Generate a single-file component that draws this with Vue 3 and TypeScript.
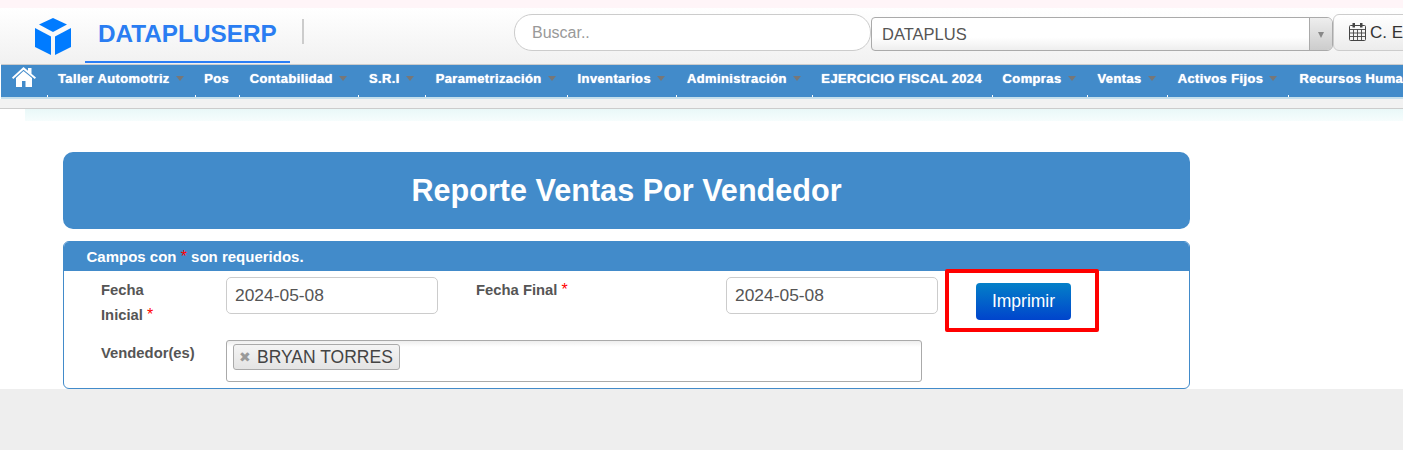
<template>
  <div class="page">
    <header class="topbar">
      <div class="brand">
        <svg class="brand__cube" viewBox="0 0 36 37" aria-hidden="true">
          <path d="M18 0 32 6.500 18 14 4 6.500Z" />
          <path d="M0 10 16 18.500V37L0 29Z" />
          <path d="M36 10 20 18.500V37L36 29Z" />
        </svg>
        <span class="brand__name">DATAPLUSERP</span>
      </div>
      <div class="topbar__rule" />
      <div class="search">Buscar..</div>
      <div class="company">
        <span class="company__value">DATAPLUS</span>
        <span class="company__arrow"><i /></span>
      </div>
      <div class="period">
        <svg class="period__icon" viewBox="0 0 17 18" aria-hidden="true">
          <path d="M1.500 2.500h14a1 1 0 0 1 1 1v13a1 1 0 0 1-1 1h-14a1 1 0 0 1-1-1v-13a1 1 0 0 1 1-1Z" fill="none" stroke="#444" />
          <path d="M1 6.500h15M1 10h15M1 13.500h15M4.500 6.500v11M8.500 6.500v11M12.500 6.500v11" fill="none" stroke="#444" stroke-width=".9" />
          <path d="M3.500 0h2.500v4.500h-2.500zM11 0h2.500v4.500h-2.500z" fill="#444" />
        </svg>
        <span>C. E</span>
      </div>
    </header>

    <nav class="menu">
      <a class="menu__home">
        <svg viewBox="0 0 24 20" aria-hidden="true">
          <path d="M11.500 0 16 3.800V1H19.500V6.800L24 10.600 22.800 12 11.500 2.800 1.200 12 0 10.600Z" />
          <path d="M11.500 4 20 11V20H13.500V14H10V20H4V11Z" />
        </svg>
      </a>
      <a
        v-for="item in menuItems"
        :key="item.label"
        class="menu__item"
        :class="{ 'menu__item--plain': !item.caret }"
      >
        {{ item.label }}<i v-if="item.caret" class="menu__caret" />
      </a>
    </nav>
    <div class="subbar" />
    <div class="fade" />

    <main class="content">
      <h1 class="title">Reporte Ventas Por Vendedor</h1>
      <section class="panel">
        <div class="panel__head">Campos con <em>*</em> son requeridos.</div>
        <div class="panel__body">
          <div class="row">
            <label class="field-label field-label--start field-label--wrap">Fecha Inicial <em>*</em></label>
            <div class="input">2024-05-08</div>
            <label class="field-label field-label--end">Fecha Final <em>*</em></label>
            <div class="input">2024-05-08</div>
            <div class="print">
              <button class="print__btn" type="button">Imprimir</button>
            </div>
          </div>
          <div class="row row--second">
            <label class="field-label field-label--start">Vendedor(es)</label>
            <div class="multi">
              <span class="tag"><i class="tag__x">✖</i>BRYAN TORRES</span>
            </div>
          </div>
        </div>
      </section>
    </main>
    <div class="footer" />
  </div>
</template>

<script setup lang="ts">
interface MenuItem {
  label: string
  caret: boolean
}

const menuItems: MenuItem[] = [
  { label: 'Taller Automotriz', caret: true },
  { label: 'Pos', caret: false },
  { label: 'Contabilidad', caret: true },
  { label: 'S.R.I', caret: true },
  { label: 'Parametrización', caret: true },
  { label: 'Inventarios', caret: true },
  { label: 'Administración', caret: true },
  { label: 'EJERCICIO FISCAL 2024', caret: false },
  { label: 'Compras', caret: true },
  { label: 'Ventas', caret: true },
  { label: 'Activos Fijos', caret: true },
  { label: 'Recursos Humanos', caret: true },
]
</script>

<style>
html,
body {
  margin: 0;
  background: #fff;
}
</style>

<style scoped>
.page {
  width: 1403px;
  height: 450px;
  overflow: hidden;
  display: flex;
  flex-direction: column;
  font-family: "Liberation Sans", Arial, sans-serif;
  color: #555;
  background: #fff;
  border-top: 8px solid #fff5f8;
  box-sizing: border-box;
}

.topbar {
  flex: 0 0 56px;
  display: flex;
  align-items: flex-start;
  background: linear-gradient(180deg, #fff 0%, #f1f1f1 100%);
}

.brand {
  flex: 0 0 205px;
  height: 55px;
  margin-left: 85px;
  display: flex;
  align-items: flex-start;
  box-sizing: border-box;
  border-bottom: 2px solid #2b7ef5;
  position: relative;
}

.brand__cube {
  position: absolute;
  left: -50px;
  top: 10px;
  width: 36px;
  height: 37px;
  fill: #007bff;
}

.brand__name {
  margin: 12px 0 0 13px;
  font-size: 24.300px;
  line-height: 28px;
  font-weight: 700;
  color: #2a7df2;
}

.topbar__rule {
  flex: 0 0 2px;
  height: 25px;
  margin: 11px 210px 0 12px;
  background: #ccc;
}

.search {
  flex: 0 0 357px;
  height: 37px;
  margin-top: 6px;
  box-sizing: border-box;
  padding-left: 17px;
  border: 1px solid #ccc;
  border-radius: 18px;
  background: #fff;
  font-size: 16px;
  line-height: 35px;
  color: #999;
}

.company {
  flex: 0 0 462px;
  height: 34px;
  margin-top: 9px;
  display: flex;
  box-sizing: border-box;
  border: 1px solid #aaa;
  border-radius: 4px 6px 6px 4px;
  background: linear-gradient(180deg, #fff 60%, #eee 100%);
  font-size: 16.500px;
  line-height: 32px;
  overflow: hidden;
}

.company__value {
  flex: 1;
  padding-left: 10px;
}

.company__arrow {
  flex: 0 0 22px;
  display: flex;
  align-items: center;
  justify-content: center;
  border-left: 1px solid #aaa;
  background: linear-gradient(180deg, #eee 0%, #ccc 100%);
}

.company__arrow i {
  width: 0;
  height: 0;
  margin-top: 2px;
  border-left: 3.500px solid transparent;
  border-right: 3.500px solid transparent;
  border-top: 6px solid #888;
}

.period {
  flex: 0 0 auto;
  width: 90px;
  height: 37px;
  margin-top: 6px;
  box-sizing: border-box;
  padding-left: 15px;
  display: flex;
  align-items: center;
  gap: 4px;
  border: 1px solid #ccc;
  border-radius: 6px;
  background: linear-gradient(180deg, #fff 0%, #ececec 100%);
  font-size: 17px;
  color: #333;
}

.period__icon {
  width: 17px;
  height: 18px;
  margin-top: -1px;
}

.menu {
  flex: 0 0 33px;
  display: flex;
  box-sizing: border-box;
  margin-left: 1px;
  border-top: 1px solid #ccc;
  background: #428bca;
  white-space: nowrap;
  box-shadow: 0 2px 0 #c5dfec;
}

.menu__home {
  flex: 0 0 46px;
  display: flex;
  padding: 2px 0 0 11px;
  box-sizing: border-box;
}

.menu__home svg {
  width: 24px;
  height: 20px;
  fill: #fff;
}

.menu__item {
  position: relative;
  flex: 0 0 auto;
  padding: 7px 11px 0;
  font-size: 13px;
  letter-spacing: 0.37px;
  line-height: 14px;
  font-weight: 700;
  color: #fff;
  text-shadow: 0 0 1px #fff;
}

.menu__item--plain {
  padding: 7px 9.500px 0;
}

.menu__item::before {
  content: "";
  position: absolute;
  left: 0;
  bottom: 0;
  width: 1px;
  height: 2px;
  background: #fff;
}

.menu__caret {
  display: inline-block;
  width: 0;
  height: 0;
  margin-left: 6px;
  vertical-align: 2px;
  border-left: 4.500px solid transparent;
  border-right: 4.500px solid transparent;
  border-top: 5px solid #777;
}

.subbar {
  flex: 0 0 10px;
  margin-top: 2px;
  box-sizing: border-box;
  background: #f2f2f2;
  border-bottom: 1px solid #ccc;
}

.fade {
  flex: 0 0 12px;
  margin-left: 25px;
  background: linear-gradient(180deg, #e9f8f8 0%, #f6fdfd 100%);
}

.content {
  flex: 0 0 268px;
  padding: 31px 0 0 63px;
  box-sizing: border-box;
  width: 1190px;
}

.title {
  margin: 0;
  height: 77px;
  border-radius: 10px;
  background: #428bca;
  color: #fff;
  font-size: 30.600px;
  line-height: 77px;
  font-weight: 700;
  text-align: center;
}

.panel {
  margin-top: 12px;
  height: 148px;
  box-sizing: border-box;
  border: 1px solid #428bca;
  border-radius: 6px;
  overflow: hidden;
}

.panel__head {
  height: 29px;
  padding-left: 22.500px;
  background: #428bca;
  color: #fff;
  font-size: 15px;
  line-height: 30px;
  font-weight: 700;
}

.panel__head em,
.field-label em {
  font-style: normal;
  color: #f00;
  font-weight: 400;
  font-size: 16px;
  line-height: 0;
}

.panel__body {
  padding: 6px 0 0;
}

.row {
  display: flex;
  align-items: flex-start;
}

.row--second {
  margin-top: 12px;
}

.field-label {
  padding-top: 1px;
  font-size: 14.800px;
  line-height: 25px;
  font-weight: 700;
  color: #555;
  box-sizing: border-box;
}

.field-label--start {
  flex: 0 0 162px;
  padding-left: 37px;
}

.field-label--wrap {
  padding-right: 70px;
}

.field-label--end {
  flex: 0 0 288px;
  padding-left: 38px;
}

.input {
  flex: 0 0 212px;
  height: 37px;
  box-sizing: border-box;
  padding-left: 8px;
  border: 1px solid #ccc;
  border-radius: 5px;
  font-size: 17.400px;
  line-height: 35px;
}

.print {
  position: relative;
  margin: 6px 0 0 38px;
}

.print::after {
  content: "";
  position: absolute;
  inset: -14px -28px -12px -31px;
  border: 4px solid #f00;
  border-radius: 2px;
  pointer-events: none;
}

.print__btn {
  display: block;
  width: 95px;
  height: 37px;
  padding: 0;
  border: 0;
  border-radius: 4px;
  background: linear-gradient(180deg, #0480c8 0%, #0044cc 100%);
  color: #fff;
  font-family: inherit;
  font-size: 17.500px;
}

.multi {
  flex: 0 0 696px;
  height: 42px;
  box-sizing: border-box;
  padding: 3px 0 0 6px;
  border: 1px solid #aaa;
  border-radius: 3px;
  background: linear-gradient(180deg, #eee 0%, #fff 15%);
}

.tag {
  display: inline-flex;
  align-items: center;
  height: 26px;
  width: 167px;
  box-sizing: border-box;
  padding-left: 5px;
  border: 1px solid #aaa;
  border-radius: 3px;
  background: linear-gradient(180deg, #f4f4f4 0%, #e4e4e4 100%);
  font-size: 17.500px;
  color: #444;
}

.tag__x {
  flex: 0 0 18px;
  font-style: normal;
  font-size: 14px;
  color: #999;
}

.footer {
  flex: 1;
  background: #eee;
}
</style>
